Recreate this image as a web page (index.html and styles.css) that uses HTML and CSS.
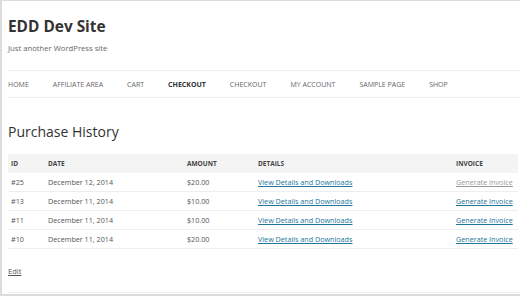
FILE: index.html
```html
<!DOCTYPE html>
<html>
    <head>
        <title>EDD Dev Site</title>
        <link rel="stylesheet" href="styles.css">
    </head>
    <body>
        <div class="frame">
            <header class="site-header">
                <h1 class="site-title">EDD Dev Site</h1>
                <p class="site-desc">Just another WordPress site</p>
            </header>

            <!-- main menu -->
            <ul class="menu">
                <li><a href="#">Home</a></li>
                <li><a href="#">Affiliate Area</a></li>
                <li><a href="#">Cart</a></li>
                <li><a class="active" href="#">Checkout</a></li>
                <li><a href="#">Checkout</a></li>
                <li><a href="#">My Account</a></li>
                <li><a href="#">Sample Page</a></li>
                <li><a href="#">Shop</a></li>
            </ul>

            <h2 class="page-title">Purchase History</h2>

            <table class="history">
                <colgroup>
                    <col class="c-id">
                    <col class="c-date">
                    <col class="c-amount">
                    <col class="c-details">
                    <col class="c-invoice">
                </colgroup>
                <tr>
                    <th>ID</th>
                    <th>Date</th>
                    <th>Amount</th>
                    <th>Details</th>
                    <th>Invoice</th>
                </tr>
                <tr>
                    <td>#25</td>
                    <td>December 12, 2014</td>
                    <td>$20.00</td>
                    <td><a href="#">View Details and Downloads</a></td>
                    <td><a class="visited" href="#">Generate Invoice</a></td>
                </tr>
                <tr>
                    <td>#13</td>
                    <td>December 11, 2014</td>
                    <td>$10.00</td>
                    <td><a href="#">View Details and Downloads</a></td>
                    <td><a href="#">Generate Invoice</a></td>
                </tr>
                <tr>
                    <td>#11</td>
                    <td>December 11, 2014</td>
                    <td>$10.00</td>
                    <td><a href="#">View Details and Downloads</a></td>
                    <td><a href="#">Generate Invoice</a></td>
                </tr>
                <tr>
                    <td>#10</td>
                    <td>December 11, 2014</td>
                    <td>$20.00</td>
                    <td><a href="#">View Details and Downloads</a></td>
                    <td><a href="#">Generate Invoice</a></td>
                </tr>
            </table>

            <p class="edit"><a href="#">Edit</a></p>
            <div class="page-end"></div>
        </div>
    </body>
</html>
```

FILE: styles.css
```css
html, body {
    margin: 0;
    padding: 0;
}
body {
    font-family: "Open Sans", "Liberation Sans", sans-serif;
    color: #555;
    background: #fff;
}
.frame {
    width: 516px;
    height: 293px;
    border-top: 1px solid #dcdcdc;
    border-left: 2px solid #dcdcdc;
    border-right: 2px solid #dcdcdc;
    border-bottom: 2px solid #dcdcdc;
    padding-left: 6px;
    overflow: hidden;
}
.site-header {
    padding-top: 14px;
}
.site-title {
    margin: 0;
    font-size: 15.4px;
    font-weight: bold;
    line-height: 24px;
    color: #333;
}
.site-desc {
    margin: 2px 0 0 0;
    font-size: 7.7px;
    line-height: 14px;
    color: #666;
}
.menu {
    list-style-type: none;
    margin: 15px 0 0 0;
    padding: 0;
    display: flex;
    border-top: 1px solid #eee;
    border-bottom: 1px solid #eee;
    height: 26px;
    align-items: center;
}
.menu li a {
    display: block;
    color: #666;
    text-decoration: none;
    text-transform: uppercase;
    font-size: 7px;
    margin-right: 24px;
}
.menu .active {
    color: #333;
    font-weight: bold;
}
.page-title {
    margin: 24px 0 0 0;
    font-size: 14px;
    font-weight: normal;
    line-height: 20px;
    color: #333;
}
.history {
    margin-top: 12px;
    border-collapse: collapse;
    table-layout: fixed;
    width: 510px;
    font-size: 7.2px;
}
.c-id { width: 37px; }
.c-date { width: 139px; }
.c-amount { width: 71px; }
.c-details { width: 198px; }
.c-invoice { width: 65px; }
.history th {
    background-color: #f4f4f4;
    color: #444;
    text-align: left;
    text-transform: uppercase;
    font-size: 6.5px;
    font-weight: bold;
    height: 19px;
    padding: 0 3px;
}
.history td {
    height: 18px;
    padding: 0 3px;
    border-bottom: 1px solid #eee;
    color: #555;
    white-space: nowrap;
}
.history a {
    color: #21759b;
}
.history a.visited {
    color: #999;
}
.edit {
    margin: 17px 0 0 0;
    font-size: 7.5px;
    line-height: 10px;
}
.edit a {
    color: #555;
}
.page-end {
    margin-top: 16px;
    border-top: 1px solid #eee;
}
```
